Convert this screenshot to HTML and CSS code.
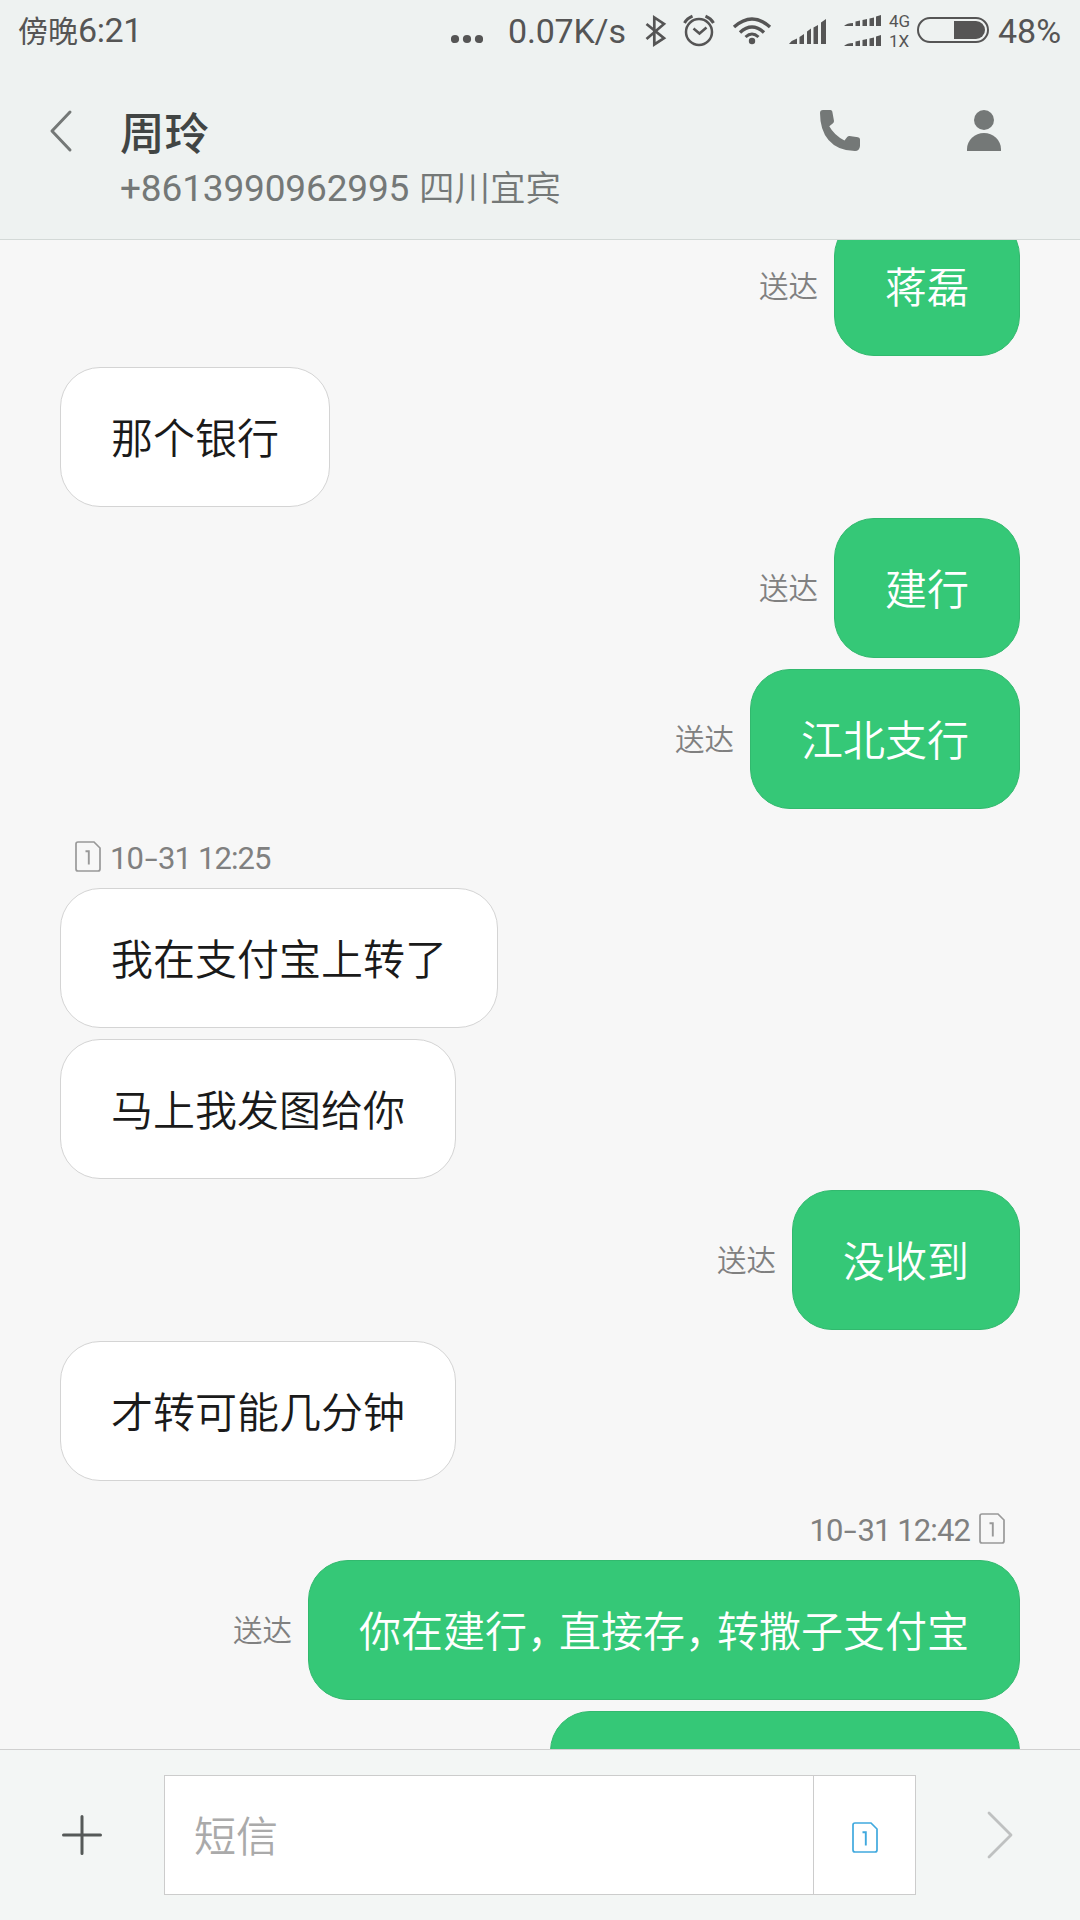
FILE: index.html
```html
<!DOCTYPE html>
<html lang="zh-CN">
<head>
<meta charset="utf-8">
<title>短信</title>
<link rel="stylesheet" href="styles.css">
</head>
<body>
<svg class="defs" width="0" height="0">
  <symbol id="sim" viewBox="0 0 26 31">
    <path d="M3 1H19L25 7V28Q25 30 23 30H3Q1 30 1 28V3Q1 1 3 1Z" fill="none" stroke="currentColor" stroke-width="1.7"/>
    <path d="M10.5 10.3H13.8V23.5" fill="none" stroke="currentColor" stroke-width="1.9"/>
  </symbol>
</svg>
<div class="screen">
  <header class="header">
    <div class="status">
      <span class="clock"><span class="clock-cjk">傍晚</span>6:21</span>
      <svg class="dots" width="32" height="10" viewBox="0 0 32 10"><g fill="#555"><circle cx="4" cy="5" r="4.1"/><circle cx="16" cy="5" r="4.1"/><circle cx="28" cy="5" r="4.1"/></g></svg>
      <span class="speed">0.07K/s</span>
      <svg class="status-icons" width="245" height="60" viewBox="640 0 245 60">
        <path d="M646.5 23L664 37.2L654.3 43.5V16.5L664 23L646.5 38" fill="none" stroke="#555" stroke-width="2.7"/>
        <g fill="none" stroke="#555" stroke-width="2.5">
          <circle cx="699" cy="31" r="13"/>
          <path d="M693.5 27.5L699.5 32.5L706.5 26.5"/>
          <path d="M684.5 22Q687 17.5 692.5 15.2M705.5 15.2Q711 17.5 713.5 22" stroke-width="3"/>
        </g>
        <g fill="none" stroke="#555" stroke-width="3.4">
          <path d="M734 26Q752 10 770 26"/>
          <path d="M740 31.4Q752 20.5 764 31.4"/>
          <path d="M745.5 36Q752 30 758.5 36" stroke-width="3"/>
        </g>
        <circle cx="752" cy="40" r="3.2" fill="#555"/>
        <g fill="#555">
          <path d="M789 43Q792 39 797 37.500V43ZM799.500 36L804 33V43H799.500ZM807 30.500L811 27.500V43H807ZM813.500 26.500L818 24V43H813.500ZM821 21.500L826 18V43H821Z"/>
          <path id="mini" d="M844 25Q847 22 853 22V25ZM855.5 20.5L860 19.5V25H855.5ZM862.5 19L867 18V25H862.5ZM869.5 17.5L874 16.5V25H869.5ZM876 15.5L881 14V25H876Z"/>
          <use href="#mini" y="20"/>
        </g>
      </svg>
      <span class="net"><span>4G</span><span>1X</span></span>
      <svg class="battery" width="72" height="26" viewBox="0 0 72 26"><rect x="1" y="1" width="70" height="24" rx="12" fill="none" stroke="#555" stroke-width="2"/><path d="M37 4H59A9 9 0 0 1 59 22H37Z" fill="#555"/></svg>
      <span class="percent">48%</span>
    </div>
    <div class="titlebar">
      <svg class="back" width="24" height="44" viewBox="0 0 24 44"><path d="M21 3L3 22L21 41" fill="none" stroke="#747877" stroke-width="3" stroke-linecap="round" stroke-linejoin="round"/></svg>
      <div class="contact">
        <h1 class="name">周玲</h1>
        <p class="number"><span class="digits">+8613990962995</span><span class="region">四川宜宾</span></p>
      </div>
      <svg class="call" width="40" height="41" viewBox="0 0 40 41"><path d="M3 0H10.500Q12 0 12.300 1.500L14 11Q14 12.500 13 13.300L9.300 16.200Q14 25 24.500 30.500L27.200 27Q28.200 26 29.500 26.100L38 27.300Q40 27.600 40 29.500V36Q39.500 41 35 41Q18 41 8.500 30Q0 20 0 3Q0 0 3 0Z" fill="#747877"/></svg>
      <svg class="person" width="34" height="41" viewBox="0 0 34 41"><circle cx="17" cy="10" r="10" fill="#747877"/><path d="M0 41V39A17 16 0 0 1 34 39V41Z" fill="#747877"/></svg>
    </div>
  </header>

  <main class="chat">
    <div class="row out"><span class="state">送达</span><div class="bubble">蒋磊</div></div>
    <div class="row in"><div class="bubble">那个银行</div></div>
    <div class="row out"><span class="state">送达</span><div class="bubble">建行</div></div>
    <div class="row out"><span class="state">送达</span><div class="bubble">江北支行</div></div>
    <div class="stamp"><svg class="sim" width="26" height="31"><use href="#sim"/></svg><time>10<i class="dash">-</i>31 12:25</time></div>
    <div class="row in"><div class="bubble">我在支付宝上转了</div></div>
    <div class="row in"><div class="bubble">马上我发图给你</div></div>
    <div class="row out"><span class="state">送达</span><div class="bubble">没收到</div></div>
    <div class="row in"><div class="bubble">才转可能几分钟</div></div>
    <div class="stamp sent"><time>10<i class="dash">-</i>31 12:42</time><svg class="sim" width="26" height="31"><use href="#sim"/></svg></div>
    <div class="row out"><span class="state">送达</span><div class="bubble">你在建行<span class="comma">，</span>直接存<span class="comma">，</span>转撒子支付宝</div></div>
    <div class="row out"><div class="bubble next"></div></div>
  </main>

  <footer class="composer">
    <svg class="plus" width="40" height="42" viewBox="0 0 40 42"><path d="M1.500 21H38.500M20 2.500V39.500" stroke="#555958" stroke-width="3" stroke-linecap="round"/></svg>
    <div class="field">
      <div class="placeholder">短信</div>
      <div class="sim-pick"><svg width="26" height="31"><use href="#sim"/></svg></div>
    </div>
    <svg class="send" width="26" height="48" viewBox="0 0 26 48"><path d="M2 2L24 24L2 46" fill="none" stroke="#bfc1c1" stroke-width="2.800" stroke-linecap="round" stroke-linejoin="round"/></svg>
  </footer>
</div>
</body>
</html>
```
FILE: styles.css
```css
* { box-sizing: border-box; }
body { margin: 0; }
.defs { position: absolute; }
svg { display: block; flex: none; }

.screen {
  width: 1080px;
  height: 1920px;
  display: flex;
  flex-direction: column;
  overflow: hidden;
  background: #f7f7f7;
  font-family: Roboto, "Noto Sans CJK SC", sans-serif;
  white-space: nowrap;
}

.header {
  flex: none;
  height: 240px;
  background: #eef2f1;
  border-bottom: 1px solid #d3d9d7;
}
.status {
  height: 62px;
  display: flex;
  align-items: center;
  padding-left: 18px;
  color: #555;
  font-size: 34px;
  line-height: 62px;
}
.status > * { flex: none; }
.clock { width: 433px; letter-spacing: -0.4px; }
.clock-cjk { font-size: 30px; letter-spacing: 0; }
.dots { margin-top: 16px; }
.speed { width: 158px; padding-left: 25px; letter-spacing: -0.2px; }
.status-icons { margin-left: -1px; margin-right: 4px; }
.net {
  width: 28px;
  display: flex;
  flex-direction: column;
  font-size: 17px;
  line-height: 20px;
}
.battery { margin-top: -2px; }
.percent { margin-left: 9px; }

.titlebar {
  display: flex;
  align-items: flex-start;
  padding: 38px 79px 0 49px;
}
.back { margin-top: 9px; }
.contact { flex: none; width: 747px; padding-left: 47px; }
.name {
  margin: 0;
  padding-top: 3px;
  font-size: 44.5px;
  line-height: 64px;
  font-weight: 500;
  color: #414544;
}
.number {
  display: flex;
  margin: -2px 0 0;
  font-size: 37px;
  line-height: 48px;
  font-weight: 350;
  color: #747877;
}
.digits { width: 299px; font-weight: 400; letter-spacing: -0.15px; }
.region { font-size: 35.5px; }
.call { margin-top: 10px; }
.person { margin: 10px 0 0 107px; }

.chat {
  flex: none;
  height: 1509px;
  overflow: hidden;
  display: flex;
  flex-direction: column;
  gap: 11px;
  padding: 0 60px;
}
.row { flex: none; display: flex; align-items: center; }
.row:first-child { margin-top: -24px; }
.out { justify-content: flex-end; }
.bubble {
  height: 140px;
  padding: 2px 50px 0;
  border: 1px solid #d4d4d4;
  border-radius: 40px;
  background: #fff;
  color: #1a1a1a;
  font-size: 42px;
  line-height: 140px;
  font-weight: 350;
}
.out .bubble {
  background: #35c877;
  border-color: #32b96e;
  color: #fff;
}
.next { width: 470px; }
.comma {
  display: inline-block;
  width: 32px;
  font-family: "Noto Sans CJK SC", sans-serif;
  font-feature-settings: "halt";
  line-height: 1;
}
.state {
  margin: -4px 16px 0 0;
  font-size: 29.5px;
  color: #808080;
  font-weight: 350;
}
.stamp {
  height: 57px;
  display: flex;
  align-items: center;
  gap: 9px;
  padding: 17px 15px 0;
  color: #808080;
  font-size: 31px;
  line-height: 40px;
  font-weight: 400;
  letter-spacing: -0.9px;
}
.stamp time { padding-top: 3px; }
.sent { justify-content: flex-end; }
.dash { display: inline-block; width: 15px; font-style: normal; transform: scaleX(1.5); text-align: center; }
.sim { color: #999; margin-top: -2px; }

.composer {
  flex: 1;
  display: flex;
  align-items: flex-start;
  padding: 25px 66px 0 62px;
  background: #f3f6f5;
  border-top: 1px solid #d0d0d0;
}
.plus { margin-top: 39px; }
.field {
  flex: none;
  width: 752px;
  height: 120px;
  margin-left: 62px;
  display: flex;
  border: 1px solid #ccc;
  background: #fff;
}
.placeholder {
  width: 648px;
  padding: 2px 0 0 29px;
  font-size: 42px;
  line-height: 120px;
  font-weight: 350;
  color: #aaa;
}
.sim-pick {
  flex: 1;
  display: flex;
  align-items: center;
  justify-content: center;
  padding-top: 4px;
  border-left: 1px solid #ccc;
  color: #40a9de;
}
.send { margin: 36px 0 0 71px; }
```
